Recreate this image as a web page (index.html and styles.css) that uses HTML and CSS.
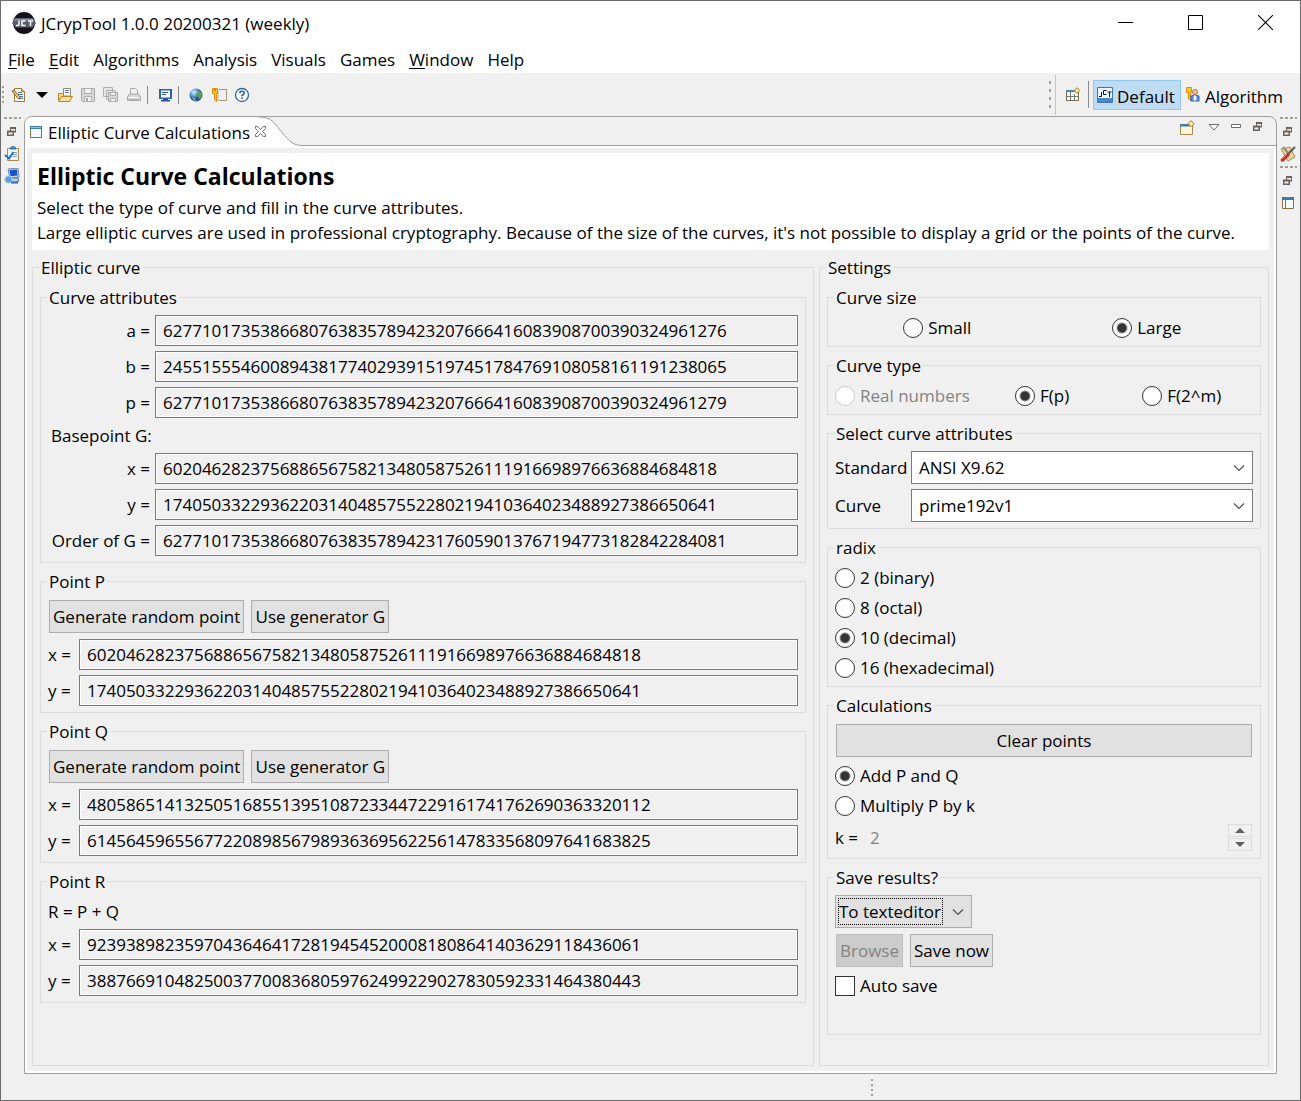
FILE: index.html
```html
<!DOCTYPE html>
<html lang="en">
<head>
<meta charset="utf-8">
<title>JCrypTool 1.0.0 20200321 (weekly)</title>
<link rel="stylesheet" href="styles.css">
</head>
<body>
<svg class="defs" width="0" height="0" aria-hidden="true">
  <symbol id="i-restore" viewBox="0 0 10 10"><path d="M3 0h6v5.500H7V9H0V3.500h3zM4 2v1.500h3V4h1V2zM1.500 5.500v2h4v-2z" fill="#6b635c" fill-rule="evenodd"/></symbol>
  <symbol id="i-chevron" viewBox="0 0 12 8"><path d="M1 1.500l5 5 5-5" fill="none" stroke="#505050" stroke-width="1.200"/></symbol>
</svg>
<div class="window">
  <header class="titlebar">
    <svg class="app-icon" width="24" height="24" viewBox="0 0 24 24"><circle cx="12" cy="12" r="11" fill="#15131a"/><path d="M3 7.500h18l3 4.500-3 4.500H3L0 12z" fill="#59606b"/><path d="M3 7.500h18l1 2H2z" fill="#8a93a1"/><path d="M7 9.500v4q0 1-1 1H4M13.500 10H10v4.500h3.500M16 10h5M18.500 10v5" stroke="#fff" stroke-width="1.500" fill="none"/></svg>
    <span class="title">JCrypTool 1.0.0 20200321 (weekly)</span>
    <div class="win-buttons">
      <button aria-label="Minimize"><svg width="15" height="15"><path d="M0 7.500h15" stroke="#000"/></svg></button>
      <button aria-label="Maximize"><svg width="15" height="15"><path d="M.5.5h14v14H.5z" fill="none" stroke="#000"/></svg></button>
      <button aria-label="Close"><svg width="15" height="15"><path d="M0 0l15 15M15 0L0 15" stroke="#000" stroke-width="1.100"/></svg></button>
    </div>
  </header>
  <nav class="menubar">
    <button><u>F</u>ile</button><button><u>E</u>dit</button><button>Algorithms</button><button>Analysis</button><button>Visuals</button><button>Games</button><button><u>W</u>indow</button><button>Help</button>
  </nav>
  <div class="toolbar">
    <i class="grip"></i>
    <button aria-label="New"><svg width="16" height="16"><path d="M3.500 1.500h7l3 3v10h-10z" fill="#fdfaf0" stroke="#9c7a3c"/><path d="M10.500 1.500v3h3" fill="#f3d58d" stroke="#9c7a3c"/><path d="M7 5.500h4M7 7.500h5M8 9.500h4M8 11.500h4" stroke="#4d6fa8"/><path d="M1 4l2-1 6 7v2l-2-.5z" fill="#f0c765" stroke="#7b6542"/></svg></button>
    <button aria-label="New menu"><svg width="12" height="6"><path d="M0 0h12L6 6z"/></svg></button>
    <button aria-label="Open"><svg width="16" height="16"><path d="M1.500 13V6.500h4l1 1h7V13z" fill="#f5d48a" stroke="#b9822b"/><path d="M6.500 1.500h7V9h-7z" fill="#fff" stroke="#8f8a74"/><path d="M8 3.500h4M8 5.500h4" stroke="#5d82b8"/><path d="M1.500 14.500l3-5h11l-3 5z" fill="#fbdf9d" stroke="#b9822b"/></svg></button>
    <button aria-label="Save" disabled><svg width="16" height="16"><path d="M1.500 1.500h13v13h-12l-1-1z" fill="#d8d8d8" stroke="#aaa"/><path d="M4.500 1.500h7v5h-7zM4.500 9.500h7v5h-7z" fill="#f2f2f2" stroke="#b0b0b0"/><path d="M6 11h2v3H6z" fill="#aaa"/></svg></button>
    <button aria-label="Save all" disabled><svg width="16" height="16"><path d="M.5.5h9v9h-9zM3.500 3.500h9v9h-9z" fill="#e6e6e6" stroke="#b0b0b0"/><path d="M5.500 5.500h9v9h-9z" fill="#d8d8d8" stroke="#aaa"/><path d="M7.500 5.500h5v3h-5zM7.500 11.500h5v3h-5z" fill="#f2f2f2" stroke="#b0b0b0"/></svg></button>
    <button aria-label="Print" disabled><svg width="16" height="16"><path d="M4.500 7V1.500h5l2 2V7" fill="#f2f2f2" stroke="#aaa"/><path d="M1.500 10l2-3h9l2 3v3.500h-13z" fill="#d8d8d8" stroke="#aaa"/><path d="M3 10.500h10" stroke="#f8f8f8"/><path d="M3 12.500h10" stroke="#b0b0b0"/></svg></button>
    <i class="sep"></i>
    <button aria-label="Console"><svg width="16" height="16"><path d="M2 2h13v10H2z" fill="#2f62ad"/><path d="M4 3.500h9v7H4z" fill="#f4f8fd"/><path d="M5 5.500h6M5 7.500h4" stroke="#2b5596"/><path d="M6 12h5v1h2v1.500H4V13h2z" fill="#2f4f86"/></svg></button>
    <i class="sep"></i>
    <button aria-label="Web"><svg width="16" height="16"><defs><radialGradient id="gl" cx=".35" cy=".3"><stop offset="0" stop-color="#d6eefc"/><stop offset=".6" stop-color="#5a9ad0"/><stop offset="1" stop-color="#23508c"/></radialGradient></defs><circle cx="8" cy="8" r="6.500" fill="url(#gl)"/><path d="M10 4q3 0 4 3l-1 4-2 1-1-3-2-1z" fill="#5f9e62"/><path d="M4 10l3 1 1 3q-3 0-4-4z" fill="#6fae8a"/></svg></button>
    <button aria-label="Keys"><svg width="16" height="16"><path d="M5.500 2.500h10v11h-10z" fill="#f0f0fa" stroke="#a9966b"/><path d="M5 2h3v12H5z" fill="#d8cfc0"/><path d="M1.500 1.500h5v5h-1v8l-2-2v-6h-2z" fill="#ffc529" stroke="#e08a0a"/><path d="M3 3h2" stroke="#9b4a00"/></svg></button>
    <button aria-label="Help"><svg width="16" height="16"><circle cx="8" cy="8" r="6.500" fill="#fff" stroke="#2d68a0" stroke-width="1.300"/><path d="M5.800 6.300q0-2 2.200-2t2.200 1.700q0 1-1.200 1.700T8 9.300M8 10.500V12" fill="none" stroke="#235b9e" stroke-width="1.600"/></svg></button>
    <div class="perspectives">
      <i class="grip"></i>
      <i class="edge"></i>
      <button aria-label="Open perspective"><svg width="16" height="16"><path d="M1.500 3.500h12v10h-12z" fill="#f3f8fd" stroke="#7d6a48"/><path d="M1 3h10v2H1z" fill="#4a85b5"/><path d="M5.500 5v8M9.500 7v6M2 9.500h11" stroke="#6f7f78"/><path d="M12 .7L14.800 3.500 12 6.300 9.200 3.500z" fill="#ffe9a6" stroke="#a8782a"/></svg></button>
      <i class="sep"></i>
      <button class="persp active"><svg width="16" height="16"><path d="M.5.5h15v15H.5z" fill="#e9f3fc" stroke="#3f76b8"/><path d="M1 11h14v4H1z" fill="#4d86c9"/><path d="M4.500 5v4.500H2M9.500 3.500h-3v4h3M10.500 5h4M12.500 5v5" fill="none" stroke="#111"/></svg><span>Default</span></button>
      <button class="persp"><svg width="16" height="16"><path d="M1.500.5h5v5h-1v8l-2-2v-6h-2z" fill="#ffc529" stroke="#e08a0a"/><circle cx="10" cy="5" r="2.500" fill="#eec39a" stroke="#b5713c"/><path d="M6 14V9q4-2 8 0v5z" fill="#5c8fe0" stroke="#3464b4"/><path d="M9 8.500h2l.5 4-1.500 1.500L8.500 12.500z" fill="#fff"/></svg><span>Algorithm</span></button>
    </div>
  </div>

  <div class="workbench">
    <aside class="rail">
      <i class="hgrip"></i>
      <button aria-label="Restore"><svg width="10" height="10"><use href="#i-restore"/></svg></button>
      <button aria-label="Tasks"><svg width="16" height="16"><path d="M3.500 2.500h11v12h-11z" fill="#eef4fb" stroke="#b08a4c"/><path d="M6 3q0-2 3-2.500Q12 1 12 3z" fill="#5d8fc6" stroke="#3b6ba5"/><path d="M9 6.500h4M9 8.500h4M9 10.500h4" stroke="#88a5c9"/><path d="M1 9l4 3.500L9.500 6" fill="none" stroke="#1674cc" stroke-width="2"/></svg></button>
      <button aria-label="Console view"><svg width="16" height="16"><path d="M4 1l10-1 1 9-9 1z" fill="#cfd9e8" stroke="#6c84ad"/><path d="M5.500 2L13 1.500l.5 6-7 .8z" fill="#1656c8"/><path d="M6 10h8l1 3-6 2z" fill="#bccce4" stroke="#5574a5"/><circle cx="4.500" cy="11.500" r="3.800" fill="#5ba0e2" stroke="#c5dcf3"/><path d="M7 14.500h7" stroke="#3469b5" stroke-width="2"/></svg></button>
    </aside>
    <main class="frame">
      <div class="tabstrip">
        <div class="tab"><svg width="12" height="12"><path d="M.5.5h11v11H.5z" fill="#f1f8fe" stroke="#7e7552"/><path d="M0 0h12v3H0z" fill="#3f7cae"/><path d="M1 1.500h10" stroke="#8fc1e6"/></svg><span>Elliptic Curve Calculations</span><button aria-label="Close tab"><svg width="11" height="11"><path d="M.5.500h2.300l2.700 3 2.700-3h2.300v2L7.500 5.500l3 3v2H8.200l-2.700-3-2.700 3H.5v-2l3-3-3-3z" fill="#fff" stroke="#707070"/></svg></button></div>
        <svg class="tab-end" width="44" height="29"><path d="M0 0C14 0 16 6 22 13C29 21 33 28.500 44 28.500V29H0z" fill="#fff"/><path d="M0 0C14 0 16 6 22 13C29 21 33 28.500 44 28.500" fill="none" stroke="#a0a0a0"/></svg>
        <div class="view-tools">
          <button aria-label="New view" class="wide"><svg width="16" height="16"><path d="M1.500 4.500h12v10h-12z" fill="#fff6da" stroke="#a58a4f"/><path d="M1 4h10v2.500H1z" fill="#3f7cae"/><path d="M12 .7L15 3.700 12 6.700 9 3.700z" fill="#ffe9a6" stroke="#a8782a"/></svg></button>
          <button aria-label="View menu"><svg width="12" height="7"><path d="M1 .5h10L6 6z" fill="#fff" stroke="#6b6b6b"/></svg></button>
          <button aria-label="Minimize view"><svg width="10" height="7"><path d="M.5.5h9v3h-9z" fill="#fff" stroke="#6b6b6b"/></svg></button>
          <button aria-label="Maximize view"><svg width="10" height="10"><use href="#i-restore"/></svg></button>
        </div>
      </div>
      <div class="view">
        <section class="intro">
          <h1>Elliptic Curve Calculations</h1>
          <p>Select the type of curve and fill in the curve attributes.<br>Large elliptic curves are used in professional cryptography. Because of the size of the curves, it's not possible to display a grid or the points of the curve.</p>
        </section>
        <div class="columns">
          <fieldset>
            <legend>Elliptic curve</legend>
            <fieldset>
              <legend>Curve attributes</legend>
              <div class="fields">
                <label for="a">a =</label><input id="a" readonly value="6277101735386680763835789423207666416083908700390324961276">
                <label for="b">b =</label><input id="b" readonly value="2455155546008943817740293915197451784769108058161191238065">
                <label for="p">p =</label><input id="p" readonly value="6277101735386680763835789423207666416083908700390324961279">
                <span class="caption">Basepoint G:</span>
                <label for="gx">x =</label><input id="gx" readonly value="602046282375688656758213480587526111916698976636884684818">
                <label for="gy">y =</label><input id="gy" readonly value="174050332293622031404857552280219410364023488927386650641">
                <label for="n">Order of G =</label><input id="n" readonly value="6277101735386680763835789423176059013767194773182842284081">
              </div>
            </fieldset>
            <fieldset>
              <legend>Point P</legend>
              <div class="buttons"><button class="btn gen">Generate random point</button><button class="btn use">Use generator G</button></div>
              <div class="fields point">
                <label for="px">x =</label><input id="px" readonly value="602046282375688656758213480587526111916698976636884684818">
                <label for="py">y =</label><input id="py" readonly value="174050332293622031404857552280219410364023488927386650641">
              </div>
            </fieldset>
            <fieldset>
              <legend>Point Q</legend>
              <div class="buttons"><button class="btn gen">Generate random point</button><button class="btn use">Use generator G</button></div>
              <div class="fields point">
                <label for="qx">x =</label><input id="qx" readonly value="4805865141325051685513951087233447229161741762690363320112">
                <label for="qy">y =</label><input id="qy" readonly value="6145645965567722089856798936369562256147833568097641683825">
              </div>
            </fieldset>
            <fieldset>
              <legend>Point R</legend>
              <div class="line">R = P + Q</div>
              <div class="fields point">
                <label for="rx">x =</label><input id="rx" readonly value="923938982359704364641728194545200081808641403629118436061">
                <label for="ry">y =</label><input id="ry" readonly value="388766910482500377008368059762499229027830592331464380443">
              </div>
            </fieldset>
          </fieldset>

          <fieldset>
            <legend>Settings</legend>
            <fieldset>
              <legend>Curve size</legend>
              <div class="options two">
                <label><input type="radio" name="size">Small</label>
                <label><input type="radio" name="size" checked>Large</label>
              </div>
            </fieldset>
            <fieldset>
              <legend>Curve type</legend>
              <div class="options three">
                <label class="off"><input type="radio" name="type" disabled>Real numbers</label>
                <label><input type="radio" name="type" checked>F(p)</label>
                <label><input type="radio" name="type">F(2^m)</label>
              </div>
            </fieldset>
            <fieldset>
              <legend>Select curve attributes</legend>
              <div class="fields selects">
                <label for="std">Standard</label>
                <div class="combo"><select id="std"><option>ANSI X9.62</option></select><svg width="12" height="8"><use href="#i-chevron"/></svg></div>
                <label for="curve">Curve</label>
                <div class="combo"><select id="curve"><option>prime192v1</option></select><svg width="12" height="8"><use href="#i-chevron"/></svg></div>
              </div>
            </fieldset>
            <fieldset>
              <legend>radix</legend>
              <div class="options">
                <label><input type="radio" name="radix">2 (binary)</label>
                <label><input type="radio" name="radix">8 (octal)</label>
                <label><input type="radio" name="radix" checked>10 (decimal)</label>
                <label><input type="radio" name="radix">16 (hexadecimal)</label>
              </div>
            </fieldset>
            <fieldset>
              <legend>Calculations</legend>
              <div class="buttons"><button class="btn full">Clear points</button></div>
              <div class="options">
                <label><input type="radio" name="op" checked>Add P and Q</label>
                <label><input type="radio" name="op">Multiply P by k</label>
              </div>
              <div class="spinner">
                <label for="k">k =</label><input id="k" value="2" disabled>
                <div class="steps">
                  <button aria-label="Increase k" disabled><svg width="10" height="5"><path d="M0 5h10L5 0z" fill="#606060"/></svg></button>
                  <button aria-label="Decrease k" disabled><svg width="10" height="5"><path d="M0 0h10L5 5z" fill="#606060"/></svg></button>
                </div>
              </div>
            </fieldset>
            <fieldset class="save">
              <legend>Save results?</legend>
              <div class="combo grey"><select aria-label="Save target"><option>To texteditor</option></select><svg width="12" height="8"><use href="#i-chevron"/></svg></div>
              <div class="buttons"><button class="btn" disabled>Browse</button><button class="btn">Save now</button></div>
              <div class="options"><label><input type="checkbox">Auto save</label></div>
            </fieldset>
          </fieldset>
        </div>
      </div>
    </main>
    <aside class="rail">
      <i class="hgrip"></i>
      <button aria-label="Restore"><svg width="10" height="10"><use href="#i-restore"/></svg></button>
      <button aria-label="Algorithms"><svg width="16" height="16"><path d="M1 3l9-2 5 10-7 4z" fill="#e8d6a0" stroke="#a38d5a"/><path d="M3 1l6 7" stroke="#8d8d84" stroke-width="2"/><path d="M15 1L9 7" stroke="#55554e" stroke-width="2"/><path d="M8 8.500L2.500 14" stroke="#cf2a22" stroke-width="3.500" stroke-linecap="round"/><path d="M7 8l-5 5" stroke="#f08078"/></svg></button>
      <i class="hgrip"></i>
      <button aria-label="Restore"><svg width="10" height="10"><use href="#i-restore"/></svg></button>
      <button aria-label="Outline"><svg width="12" height="12"><path d="M.5.5h11v11H.5z" fill="#f3f9fe" stroke="#8a7442"/><path d="M0 0h12v3H0z" fill="#3f7cae"/><path d="M3.500 3v8" stroke="#56799b"/></svg></button>
    </aside>
  </div>
  <footer class="status"><i class="grip"></i></footer>
</div>
</body>
</html>
```
FILE: styles.css
```css
* { box-sizing: border-box; }
body {
  margin: 0;
  font: 17px/25px "Open Sans", "Noto Sans", sans-serif;
  color: #000;
  background: #f0f0f0;
}
button, input, select { font: inherit; color: inherit; margin: 0; }
button { padding: 0; border: 0; background: none; }
svg { display: block; flex: none; }
.defs { position: absolute; }

.window {
  min-height: 100vh;
  display: flex;
  flex-direction: column;
  border: 1px solid #6b6b6b;
}
.titlebar { display: flex; align-items: center; height: 44px; padding-left: 11px; background: #fff; }
.title { flex: 1; margin-left: 5px; }
.win-buttons { display: flex; align-self: flex-start; }
.win-buttons button { display: grid; place-items: center; width: 70px; height: 43px; }

.menubar { display: flex; gap: 14px; height: 28px; padding-left: 7px; background: #fff; }
.menubar button { height: 28px; white-space: nowrap; }
.menubar u { text-underline-offset: 2px; }

.toolbar { display: flex; align-items: center; height: 43px; }
.toolbar button { display: grid; place-items: center; width: 23px; height: 23px; }
.grip {
  width: 2px;
  height: 27px;
  background: repeating-linear-gradient(#a09f94 0 3px, transparent 3px 8px);
}
.toolbar > .grip { height: 17px; margin: 0 3px 0 1px; background: repeating-linear-gradient(#a09f94 0 2px, transparent 2px 5px); }
.sep { width: 1px; height: 18px; margin: 0 5px 0 2px; background: #8a8a8a; }
.perspectives { display: flex; align-items: center; height: 43px; margin-left: auto; padding-right: 13px; }
.perspectives .edge { width: 1px; height: 40px; margin: 0 5px 0 4px; background: #c4c4c4; }
.perspectives .sep { height: 27px; margin: 0 4px; }
.perspectives .persp {
  display: flex;
  align-items: center;
  gap: 4px;
  width: auto;
  height: 30px;
  padding: 0 3px;
  border: 1px solid transparent;
}
.persp span { padding-top: 4px; }
.perspectives .active { width: 88px; background: #bfdcf3; border-color: #90c8f6; }

.workbench { flex: 1; display: grid; grid-template-columns: 23px minmax(0, 1fr) 23px; }
.rail { display: flex; flex-direction: column; }
.rail button { display: grid; place-items: center; width: 22px; height: 22px; }
.hgrip {
  width: 17px;
  height: 2px;
  margin: 1px 3px 2px;
  background: repeating-linear-gradient(90deg, #a09f94 0 3px, transparent 3px 5px);
}

.frame {
  display: flex;
  flex-direction: column;
  border: 1px solid #a0a0a0;
  border-radius: 8px 8px 0 0;
  overflow: hidden;
}
.tabstrip { display: flex; height: 29px; }
.tab { display: flex; align-items: center; height: 29px; padding-left: 5px; background: #fff; white-space: nowrap; }
.tab span { margin: 2px 5px 0 6px; }
.tab button { position: relative; z-index: 1; }
.tab-end { margin-left: -8px; }
.view-tools {
  flex: 1;
  display: flex;
  justify-content: flex-end;
  height: 29px;
  padding-right: 7px;
  border-bottom: 1px solid #a0a0a0;
}
.view-tools button { display: grid; place-items: center; width: 22px; height: 20px; }
.view-tools .wide { margin-right: 5px; height: 22px; }

.view { flex: 1; display: flex; flex-direction: column; border: 2px solid #fff; padding: 5px; gap: 5px; }
.intro { padding: 5px; background: #fff; }
h1 { margin: 0 0 1px; font-size: 23px; line-height: 36px; font-weight: 700; }
p { margin: 0; }

.columns { flex: 1; display: grid; grid-template-columns: minmax(0, 1fr) 450px; gap: 5px; }
fieldset { min-width: 0; margin: 0; padding: 5px 7px; border: 1px solid #dcdcdc; }
fieldset fieldset { margin-bottom: 6px; padding-bottom: 6px; }
legend { padding: 0 2px; margin-left: -1px; line-height: 25px; }

.fields { display: grid; grid-template-columns: 102px minmax(0, 1fr); gap: 5px; align-items: center; }
.fields label { text-align: right; }
.point { grid-template-columns: 26px minmax(0, 1fr); }
.selects { grid-template-columns: 71px minmax(0, 1fr); }
.selects label, .point label { text-align: left; white-space: nowrap; }
.caption { grid-column: 1 / -1; padding-left: 3px; }
.fields input {
  width: 100%;
  height: 31px;
  padding: 0 7px;
  border: 1px solid #7a7a7a;
  outline: 0;
  background: #f0f0f0;
  box-shadow: inset 0 0 0 1px #fff;
}
.line { margin-bottom: 5px; }

.buttons { display: flex; gap: 7px; padding: 1px; margin-bottom: 5px; }
.btn { height: 33px; padding: 0 3px; border: 1px solid #adadad; background: #e1e1e1; white-space: nowrap; }
.btn:disabled { background: #ccc; border-color: #bfbfbf; color: #838383; }
.gen { min-width: 195px; }
.use { min-width: 138px; }
.full { flex: 1; }

.options { display: grid; gap: 5px; }
.two { grid-template-columns: 1fr 1fr; justify-items: center; padding-right: 4px; }
.three { grid-template-columns: repeat(3, 1fr); justify-items: center; padding-right: 4px; }
.options label { display: flex; align-items: center; gap: 5px; white-space: nowrap; }
.off { color: #838383; }
input[type="radio"], input[type="checkbox"] {
  appearance: none;
  flex: none;
  width: 20px;
  height: 20px;
  border: 1px solid #333;
  background: #fff;
}
input[type="radio"] { border-radius: 50%; }
input[type="radio"]:checked { background: radial-gradient(circle, #333 0 4px, #fff 6px); }
input[type="radio"]:disabled { border-color: #ccc; }

.combo { position: relative; height: 33px; }
.combo select {
  appearance: none;
  width: 100%;
  height: 33px;
  padding: 0 7px;
  border: 1px solid #7a7a7a;
  border-radius: 0;
  background: #fff;
}
.combo svg { position: absolute; right: 8px; top: 13px; pointer-events: none; }
.grey { width: 137px; margin-bottom: 5px; }
.grey select { padding: 0 3px; border-color: #adadad; background: #e1e1e1; }
.grey::after {
  content: "";
  position: absolute;
  inset: 3px 29px 3px 3px;
  border: 1px dotted #000;
  pointer-events: none;
}

.spinner { display: flex; align-items: center; gap: 12px; height: 29px; margin-top: 5px; }
.spinner input { flex: 1; min-width: 0; padding: 0; border: 0; background: none; color: #838383; }
.steps { display: grid; gap: 1px; margin-right: 1px; }
.steps button { display: grid; place-items: center; width: 24px; height: 13px; border: 1px solid #dcdcdc; }
fieldset .save { min-height: 170px; margin-bottom: 24px; }

.status { height: 26px; display: flex; align-items: center; justify-content: center; padding-left: 443px; }
.status .grip { height: 17px; background: repeating-linear-gradient(#a09f94 0 2px, transparent 2px 5px); }
```
